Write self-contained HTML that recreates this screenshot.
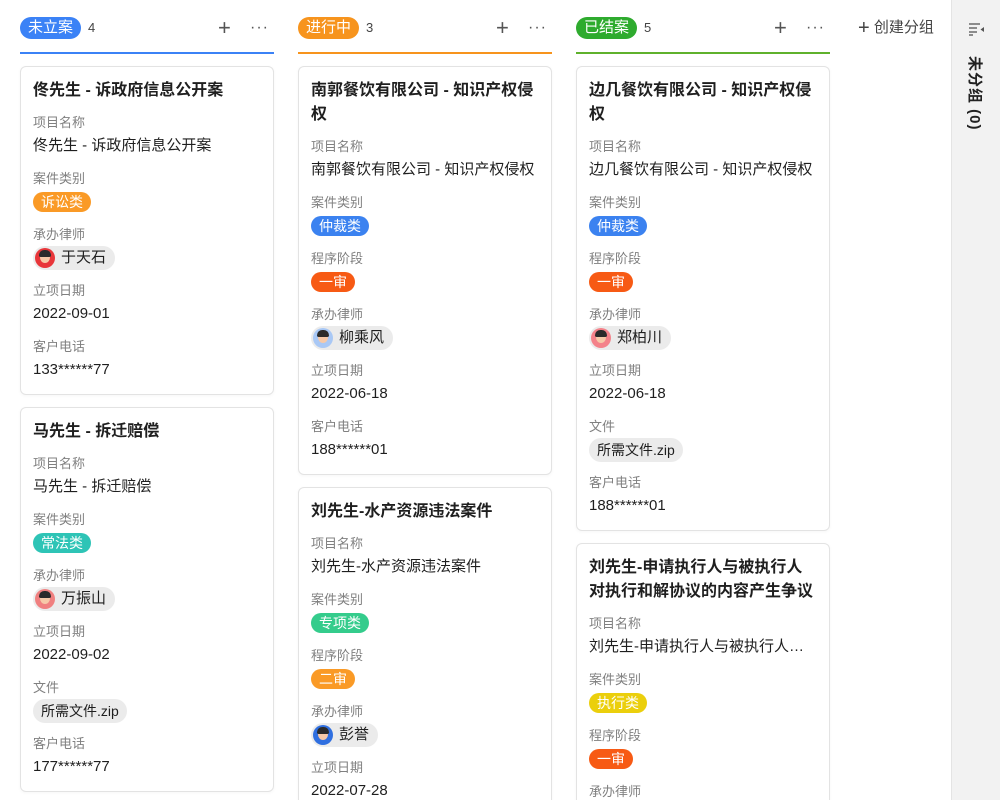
<!DOCTYPE html>
<html><head><meta charset="utf-8"><style>
*{box-sizing:border-box;margin:0;padding:0}
html,body{width:1000px;height:800px;overflow:hidden}
body{background:#fff;font-family:"Liberation Sans","Noto Sans CJK SC",sans-serif;color:#1f1f1f;position:relative}
.col{position:absolute;top:0;width:254px}
.hd{height:54px;position:relative;border-bottom:2px solid;}
.grp{position:absolute;left:0;top:17px;height:22px;line-height:22px;padding:0 8px;border-radius:11px;color:#fff;font-size:15px}
.cnt{position:absolute;top:17px;line-height:22px;font-size:13px;color:#444}
.plus{position:absolute;left:198px;top:16px;font-size:22px;line-height:24px;color:#555;font-weight:300}
.dots{position:absolute;left:230px;top:16px;font-size:16px;line-height:24px;color:#555;letter-spacing:1px}
.card{margin-top:12px;border:1px solid #e3e3e3;border-radius:6px;padding:12px 12px 12px;box-shadow:0 1px 3px rgba(0,0,0,.04)}
.t{font-size:16px;font-weight:bold;line-height:24px;margin-bottom:9px}
.l{font-size:13px;color:#808080;line-height:22px}
.v{font-size:15px;line-height:24px;margin-bottom:10px;white-space:nowrap;overflow:hidden;text-overflow:ellipsis}
.v:last-child{margin-bottom:0}
.tag{display:inline-block;height:20px;line-height:20px;padding:0 8px;border-radius:10px;color:#fff;font-size:14px;vertical-align:middle}
.chip{display:inline-flex;align-items:center;height:24px;border-radius:12px;background:#ebebeb;padding:0 9px 0 2px;font-size:15px;vertical-align:middle}
.av{width:20px;height:20px;border-radius:50%;margin-right:6px;position:relative;overflow:hidden}
.av:after{content:"";position:absolute;left:5px;top:4px;width:10px;height:11px;border-radius:50%;background:#f6c9a8}
.av:before{content:"";position:absolute;left:4px;top:2px;width:12px;height:7px;border-radius:6px 6px 2px 2px;background:#2b2b2b;z-index:1}
.file{display:inline-block;height:24px;line-height:24px;padding:0 8px;border-radius:12px;background:#ebebeb;font-size:14px;vertical-align:middle}
.side{position:absolute;left:951px;top:0;width:49px;height:800px;background:#f2f2f2;border-left:1px solid #e4e4e4}
</style></head><body>

<div class="col" style="left:20px">
 <div class="hd" style="border-color:#3b82f6"><span class="grp" style="background:#3b82f6">未立案</span><span class="cnt" style="left:68px">4</span><span class="plus">+</span><span class="dots">···</span></div>
 <div class="card">
  <div class="t">佟先生 - 诉政府信息公开案</div>
  <div class="l">项目名称</div><div class="v">佟先生 - 诉政府信息公开案</div>
  <div class="l">案件类别</div><div class="v"><span class="tag" style="background:#fa9a26">诉讼类</span></div>
  <div class="l">承办律师</div><div class="v"><span class="chip"><span class="av" style="background:#e8363a"></span>于天石</span></div>
  <div class="l">立项日期</div><div class="v">2022-09-01</div>
  <div class="l">客户电话</div><div class="v">133******77</div>
 </div>
 <div class="card">
  <div class="t">马先生 - 拆迁赔偿</div>
  <div class="l">项目名称</div><div class="v">马先生 - 拆迁赔偿</div>
  <div class="l">案件类别</div><div class="v"><span class="tag" style="background:#2ec4b6">常法类</span></div>
  <div class="l">承办律师</div><div class="v"><span class="chip"><span class="av" style="background:#f08080"></span>万振山</span></div>
  <div class="l">立项日期</div><div class="v">2022-09-02</div>
  <div class="l">文件</div><div class="v"><span class="file">所需文件.zip</span></div>
  <div class="l">客户电话</div><div class="v">177******77</div>
 </div>
</div>

<div class="col" style="left:298px">
 <div class="hd" style="border-color:#f7941d"><span class="grp" style="background:#f7941d">进行中</span><span class="cnt" style="left:68px">3</span><span class="plus">+</span><span class="dots">···</span></div>
 <div class="card">
  <div class="t">南郭餐饮有限公司 - 知识产权侵权</div>
  <div class="l">项目名称</div><div class="v">南郭餐饮有限公司 - 知识产权侵权</div>
  <div class="l">案件类别</div><div class="v"><span class="tag" style="background:#3b82f0">仲裁类</span></div>
  <div class="l">程序阶段</div><div class="v"><span class="tag" style="background:#f75a14">一审</span></div>
  <div class="l">承办律师</div><div class="v"><span class="chip"><span class="av" style="background:#a9c8f5"></span>柳乘风</span></div>
  <div class="l">立项日期</div><div class="v">2022-06-18</div>
  <div class="l">客户电话</div><div class="v">188******01</div>
 </div>
 <div class="card">
  <div class="t">刘先生-水产资源违法案件</div>
  <div class="l">项目名称</div><div class="v">刘先生-水产资源违法案件</div>
  <div class="l">案件类别</div><div class="v"><span class="tag" style="background:#34cc8c">专项类</span></div>
  <div class="l">程序阶段</div><div class="v"><span class="tag" style="background:#fa9a26">二审</span></div>
  <div class="l">承办律师</div><div class="v"><span class="chip"><span class="av" style="background:#2f6fe0"></span>彭誉</span></div>
  <div class="l">立项日期</div><div class="v">2022-07-28</div>
  <div class="l">客户电话</div><div class="v">188******01</div>
 </div>
</div>

<div class="col" style="left:576px">
 <div class="hd" style="border-color:#5fb12c"><span class="grp" style="background:#2eab2e">已结案</span><span class="cnt" style="left:68px">5</span><span class="plus">+</span><span class="dots">···</span></div>
 <div class="card">
  <div class="t">边几餐饮有限公司 - 知识产权侵权</div>
  <div class="l">项目名称</div><div class="v">边几餐饮有限公司 - 知识产权侵权</div>
  <div class="l">案件类别</div><div class="v"><span class="tag" style="background:#3b82f0">仲裁类</span></div>
  <div class="l">程序阶段</div><div class="v"><span class="tag" style="background:#f75a14">一审</span></div>
  <div class="l">承办律师</div><div class="v"><span class="chip"><span class="av" style="background:#f4828a"></span>郑柏川</span></div>
  <div class="l">立项日期</div><div class="v">2022-06-18</div>
  <div class="l">文件</div><div class="v"><span class="file">所需文件.zip</span></div>
  <div class="l">客户电话</div><div class="v">188******01</div>
 </div>
 <div class="card">
  <div class="t">刘先生-申请执行人与被执行人对执行和解协议的内容产生争议</div>
  <div class="l">项目名称</div><div class="v">刘先生-申请执行人与被执行人对执行和解协议的内容产生争议</div>
  <div class="l">案件类别</div><div class="v"><span class="tag" style="background:#ebcf0c">执行类</span></div>
  <div class="l">程序阶段</div><div class="v"><span class="tag" style="background:#f75a14">一审</span></div>
  <div class="l">承办律师</div><div class="v"><span class="chip"><span class="av" style="background:#e8363a"></span>于天石</span></div>
 </div>
</div>

<div style="position:absolute;left:858px;top:17px;line-height:22px;font-size:15px;color:#444"><span style="font-size:20px;font-weight:300;vertical-align:-2px">+</span> 创建分组</div>

<div class="side">
 <svg style="position:absolute;left:16px;top:22px" width="18" height="14" viewBox="0 0 18 14"><g stroke="#555" stroke-width="1.3"><line x1="1" y1="2" x2="12" y2="2"/><line x1="1" y1="6" x2="9" y2="6"/><line x1="1" y1="10" x2="9" y2="10"/><line x1="1" y1="13" x2="5" y2="13"/></g><path d="M16 5 L12.5 7.5 L16 10Z" fill="#555"/></svg>
 <div style="position:absolute;left:13px;top:56px;writing-mode:vertical-rl;text-orientation:sideways;font-size:15px;font-weight:bold;color:#222;letter-spacing:1px;white-space:nowrap">未分组 (0)</div>
</div>
</body></html>
